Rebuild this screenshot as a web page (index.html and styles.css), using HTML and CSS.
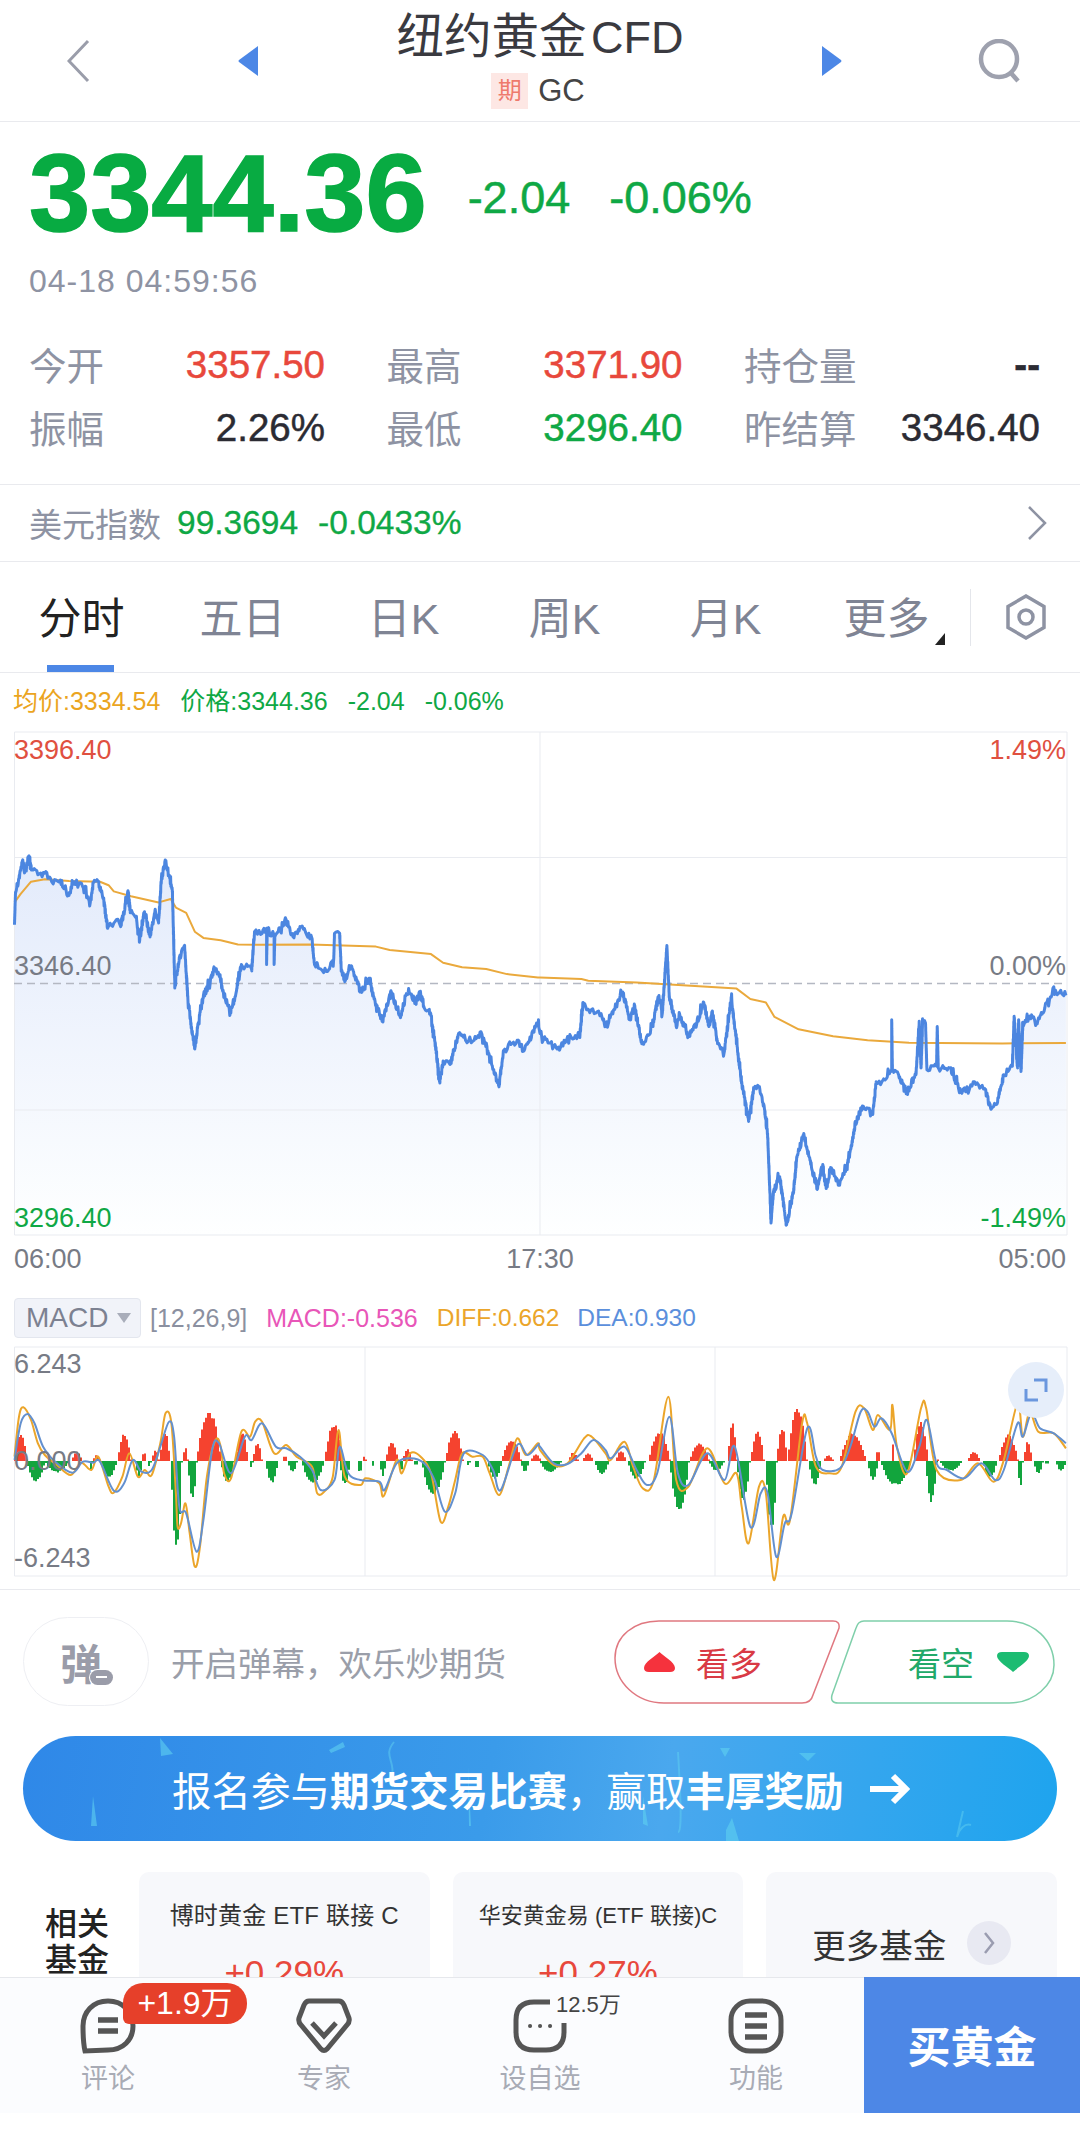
FILE: index.html
```html
<!DOCTYPE html>
<html lang="zh-CN">
<head>
<meta charset="utf-8">
<title>纽约黄金 CFD</title>
<link rel="stylesheet" href="styles.css">
</head>
<body>
<div class="page">
  <header class="nav">
    <svg class="nav-back" viewBox="0 0 23 44"><path d="M21 2 2 22l19 20"/></svg>
    <svg class="nav-tri" viewBox="0 0 20 30"><path d="M20 0 1 14q-1 1 0 2l19 14z"/></svg>
    <div class="nav-title">
      <div class="nav-name"><span class="nav-cn">纽约黄金</span> <span class="nav-en">CFD</span></div>
      <div class="nav-sub"><span class="tag">期</span><span class="code">GC</span></div>
    </div>
    <svg class="nav-tri nav-next" viewBox="0 0 20 30"><path d="M0 0 19 14q1 1 0 2L0 30z"/></svg>
    <svg class="nav-search" viewBox="0 0 43 44"><circle cx="21" cy="20" r="18"/><path d="m32 33 8 9"/></svg>
  </header>

  <section class="quote">
    <div class="price-row">
      <span class="price">3344.36</span>
      <span class="change">-2.04</span>
      <span class="change">-0.06%</span>
    </div>
    <div class="time">04-18 04:59:56</div>
    <div class="stats">
      <div class="stat"><span class="stat-k">今开</span><span class="stat-v up">3357.50</span></div>
      <div class="stat"><span class="stat-k">最高</span><span class="stat-v up">3371.90</span></div>
      <div class="stat"><span class="stat-k">持仓量</span><span class="stat-v strong">--</span></div>
      <div class="stat"><span class="stat-k">振幅</span><span class="stat-v">2.26%</span></div>
      <div class="stat"><span class="stat-k">最低</span><span class="stat-v down">3296.40</span></div>
      <div class="stat"><span class="stat-k">昨结算</span><span class="stat-v">3346.40</span></div>
    </div>
  </section>

  <section class="index-row">
    <span class="index-name">美元指数</span>
    <span class="index-val">99.3694</span>
    <span class="index-val index-pct">-0.0433%</span>
    <svg class="index-arrow" viewBox="0 0 20 34"><path d="m2 1 16 16L2 33"/></svg>
  </section>

  <nav class="tabs">
    <div class="tab active">分时</div>
    <div class="tab">五日</div>
    <div class="tab">日K</div>
    <div class="tab">周K</div>
    <div class="tab">月K</div>
    <div class="tab">更多<svg class="tab-more" viewBox="0 0 10 12"><path d="M10 0v12H0z"/></svg></div>
    <div class="tab-sep"></div>
    <svg class="tab-set" viewBox="0 0 42 46"><path d="M21 2 39 12.500V33.500L21 44 3 33.500V12.500z"/><circle cx="21" cy="23" r="7"/></svg>
  </nav>

  <div class="legend">
    <span class="avg">均价:3334.54</span>
    <span class="down">价格:3344.36</span>
    <span class="down">-2.04</span>
    <span class="down">-0.06%</span>
  </div>

  <section class="chart">
    <svg class="chart-svg" viewBox="0 0 1080 550">
      <defs>
        <linearGradient id="areaFill" gradientUnits="userSpaceOnUse" x1="0" y1="120" x2="0" y2="505">
          <stop offset="0" stop-color="#e2eafb"/>
          <stop offset="1" stop-color="#feffff"/>
        </linearGradient>
      </defs>
      <path id="area" fill="url(#areaFill)"/>
      <path class="grid-line" d="M14.500 2H1067V505H14.500zM14 127.500H1067M14 380H1067M540 2V505"/>
      <path class="dash-line" d="M14 253.500H1067"/>
      <path id="avgLine" class="line-avg"/>
      <path id="priceLine" class="line-price"/>
    </svg>
    <span class="lab lab-l up lab-top">3396.40</span>
    <span class="lab lab-r up lab-top">1.49%</span>
    <span class="lab lab-l lab-mid">3346.40</span>
    <span class="lab lab-r lab-mid">0.00%</span>
    <span class="lab lab-l down lab-bot">3296.40</span>
    <span class="lab lab-r down lab-bot">-1.49%</span>
    <div class="axis">
      <span>06:00</span><span>17:30</span><span>05:00</span>
    </div>
  </section>

  <section class="macd">
    <svg class="macd-svg" viewBox="0 0 1080 309">
      <path class="grid-line" d="M14.500 67H1067V296H14.500zM365 67V296M715 67V296"/>
      <path id="barsUp" fill="#f5432f"/>
      <path id="barsDown" fill="#12a53d"/>
      <path id="diffLine" class="line-diff"/>
      <path id="deaLine" class="line-dea"/>
    </svg>
    <div class="macd-head">
      <div class="macd-btn">MACD<i class="macd-caret"></i></div>
      <span class="macd-params">[12,26,9]</span>
      <span class="macd-m">MACD:-0.536</span>
      <span class="macd-d">DIFF:0.662</span>
      <span class="macd-e">DEA:0.930</span>
    </div>
    <span class="mlab mlab-top">6.243</span>
    <span class="mlab mlab-mid">0.000</span>
    <span class="mlab mlab-bot">-6.243</span>
    <div class="expand">
      <svg viewBox="0 0 24 24"><path d="M10 2h12v12M2 11v11h12"/></svg>
    </div>
  </section>

  <section class="danmu">
    <div class="danmu-pill"><span class="danmu-glyph">弹</span><i class="danmu-off"></i></div>
    <span class="danmu-text">开启弹幕&#xFF0C;欢乐炒期货</span>
    <div class="vote">
      <svg class="vote-shape" viewBox="0 0 441 84">
        <path class="vote-red" d="M45 1H219Q226 1 225 8L199 75Q197 83 188 83H50C22 83 1 62 1 38C1 16 20 1 45 1Z"/>
        <path class="vote-green" d="M250 1H393C420 1 440 20 440 45C440 65 420 83 395 83H224Q216 83 218 75L242 8Q244 1 250 1Z"/>
      </svg>
      <div class="vote-up">
        <svg viewBox="0 0 31 20"><path d="M15.500 0C19 4 31 10 31 16q0 4-5 4H5q-5 0-5-4C0 10 12 4 15.500 0z"/></svg>
        <span>看多</span>
      </div>
      <div class="vote-down">
        <span>看空</span>
        <svg viewBox="0 0 32 20"><path d="M16 20C12 16 0 9 0 4q0-4 5-4h22q5 0 5 4c0 5-12 12-16 16z"/></svg>
      </div>
    </div>
  </section>

  <section class="banner">
    <svg class="banner-bits" viewBox="0 0 1034 105">
      <path class="bit" d="M137 2 150 18 138 20zM306 14l14-8 2 5-14 6zM697 12h10l-5 9zM776 17h17l-8 8zM703 94l6-12 7 23h-13zM70 60l4 30h-6zM620 60l5 30-5-2zM445 30l3 60h-2z"/>
      <path class="curve" d="M371 6c-8 10-4 14-2 24s-2 14 2 20M655 16c3 50 4 80 0 80M940 75l-6 26c2-8 8-14 14-12"/>
    </svg>
    <span class="banner-text">报名参与<b>期货交易比赛</b>&#xFF0C;赢取<b>丰厚奖励</b></span>
    <svg class="banner-arrow" viewBox="0 0 42 32"><path d="M2 16h36M25 3l13 13-13 13"/></svg>
  </section>

  <section class="funds">
    <div class="funds-label">相关<br>基金</div>
    <div class="card">
      <div class="card-title">博时黄金 ETF 联接 C</div>
      <div class="card-val">+0.29%</div>
    </div>
    <div class="card">
      <div class="card-title card-title-sm">华安黄金易 (ETF 联接)C</div>
      <div class="card-val">+0.27%</div>
    </div>
    <div class="card card-more">
      <span>更多基金</span>
      <i class="more-dot"><svg viewBox="0 0 12 24"><path d="m2 2 8 10-8 10"/></svg></i>
    </div>
  </section>

  <footer class="bar">
    <div class="bar-item">
      <svg class="bar-icon" viewBox="0 0 56 56"><path d="M28 3C13 3 3 14 3 28c0 9 0 16 2 25l23-1c15 0 25-10 25-24S43 3 28 3z"/><path class="fill-bars" d="M18 22h20M18 33h20"/></svg>
      <span>评论</span>
      <em class="badge">+1.9万</em>
    </div>
    <div class="bar-item">
      <svg class="bar-icon" viewBox="0 0 56 56"><path d="M13 3h30q3 0 5 4l5 13q1 4-2 7L31 51q-3 3-6 0L5 27q-3-3-2-7L8 7q2-4 5-4z"/><path d="m16 25 12 13 12-13"/></svg>
      <span>专家</span>
    </div>
    <div class="bar-item">
      <svg class="bar-icon" viewBox="0 0 56 56"><path d="M38 4H22C10 4 4 10 4 22v12c0 12 6 18 18 18h12c12 0 18-6 18-18V25"/><path class="dots" d="M18 28h.1M28 28h.1M38 28h.1"/></svg>
      <span>设自选</span>
      <em class="count">12.5万</em>
    </div>
    <div class="bar-item">
      <svg class="bar-icon" viewBox="0 0 56 56"><rect x="3" y="3" width="50" height="50" rx="19"/><path class="fill-bars" d="M17 17h22M17 28h22M17 39h22"/></svg>
      <span>功能</span>
    </div>
    <div class="buy">买黄金</div>
  </footer>
</div>
<script src="chart.js"></script>
</body>
</html>
```
FILE: styles.css
```css
* { box-sizing: border-box; }
html, body { margin: 0; padding: 0; background: #fff; }
body { font-family: "Liberation Sans", "Noto Sans CJK SC", sans-serif; color: #2b2b33; }
.page { position: relative; width: 1080px; height: 2141px; overflow: hidden; background: #fff; }
.up { color: #e8483c; }
.down { color: #0fa845; }

.nav { display: flex; align-items: center; height: 122px; padding: 0 59px 0 67px; border-bottom: 1px solid #e9eaee; }
.nav-back { width: 23px; height: 44px; margin-right: 148px; fill: none; stroke: #9a9daa; stroke-width: 3; }
.nav-tri { width: 20px; height: 30px; fill: #4c87e6; }
.nav-search { width: 43px; height: 44px; margin-left: 136px; fill: none; stroke: #9ea1ae; stroke-width: 4.500; }
.nav-title { flex: 1; align-self: flex-start; padding-top: 11px; text-align: center; }
.nav-name { height: 52px; line-height: 52px; color: #3a3a40; white-space: nowrap; }
.nav-cn { font-size: 47.500px; }
.nav-en { font-size: 45px; }
.nav-sub { display: flex; justify-content: center; align-items: center; height: 36px; margin-top: 10px; padding-right: 4px; }
.tag { width: 37px; height: 36px; line-height: 36px; font-size: 24px; text-align: center; color: #ee7a6c; background: #fde7e4; }
.code { margin-left: 10px; font-size: 31px; color: #444; }

.quote { height: 363px; padding-top: 16px; border-bottom: 1px solid #e9eaee; }
.price-row { display: flex; align-items: center; height: 110px; padding-left: 29px; color: #0fa845; }
.price { margin-right: 41px; font-size: 110px; line-height: 110px; font-weight: 700; color: #08ab42; -webkit-text-stroke: 1.500px #08ab42; }
.change { margin: 10px 39px 0 0; font-size: 45px; -webkit-text-stroke: .5px #0fa845; }
.time { height: 40px; margin-top: 13px; padding-left: 29px; font-size: 32px; line-height: 40px; letter-spacing: 1px; color: #8e93a3; }
.stats { display: grid; grid-template-columns: repeat(3, 296px); grid-auto-rows: 63px; column-gap: 61.500px; margin-top: 32px; padding-left: 29px; }
.stat { display: flex; justify-content: space-between; align-items: center; }
.stat-k { margin-top: -3px; font-size: 37.500px; color: #8e93a3; }
.stat-v { font-size: 38.500px; -webkit-text-stroke: .5px currentColor; }
.stat-v.strong { font-weight: 700; }

.index-row { display: flex; align-items: center; height: 77px; padding: 0 33px 0 29px; border-bottom: 1px solid #e9eaee; }
.index-name { font-size: 33px; color: #8e93a3; }
.index-val { margin-left: 16px; font-size: 33.500px; color: #0fa845; -webkit-text-stroke: .3px #0fa845; }
.index-pct { margin-left: 20px; }
.index-arrow { width: 20px; height: 34px; margin-left: auto; fill: none; stroke: #8e93a3; stroke-width: 2.500; }

.tabs { display: flex; align-items: center; height: 111px; padding-left: 1px; border-bottom: 1px solid #e9eaee; }
.tab { position: relative; width: 161px; height: 110px; line-height: 114px; font-size: 43px; text-align: center; color: #7f8494; }
.tab.active { color: #222; }
.tab.active::after { content: ""; position: absolute; left: 46px; bottom: 0; width: 67px; height: 7px; background: #4c87e6; }
.tab-more { position: absolute; left: 129px; top: 71px; width: 10px; height: 12px; fill: #222; }
.tab-sep { width: 1px; height: 57px; margin-left: 3px; background: #e4e6eb; }
.tab-set { width: 42px; height: 46px; margin-left: 34px; fill: none; stroke: #8e93a3; stroke-width: 3.500; }

.legend { display: flex; align-items: baseline; gap: 20px; height: 57px; padding: 14px 0 0 13px; font-size: 25px; line-height: 28px; }
.legend span { display: block; height: 28px; }
.avg { color: #eba51f; }

.chart { position: relative; height: 550px; }
.chart-svg, .macd-svg { position: absolute; left: 0; top: 0; width: 1080px; }
.chart-svg { height: 550px; }
.grid-line { fill: none; stroke: #e9ebf0; stroke-width: 1; }
.dash-line { fill: none; stroke: #b4b8c2; stroke-width: 1.500; stroke-dasharray: 8 5; }
.line-avg { fill: none; stroke: #eaa93c; stroke-width: 2; stroke-linejoin: round; }
.line-price { fill: none; stroke: #4c86e0; stroke-width: 3; stroke-linejoin: round; }
.lab { position: absolute; height: 32px; line-height: 32px; font-size: 27px; color: #777b85; }
.lab.up { color: #e0503f; }
.lab.down { color: #0fa845; }
.lab-l { left: 14px; }
.lab-r { right: 14px; }
.lab-top { top: 4px; }
.lab-mid { top: 220px; }
.lab-bot { top: 472px; }
.axis { position: absolute; left: 14px; right: 14px; top: 513px; display: flex; justify-content: space-between; font-size: 27px; line-height: 32px; color: #777b85; }

.macd { position: relative; height: 310px; padding-top: 18px; border-bottom: 1px solid #e9eaee; }
.macd-svg { height: 309px; }
.macd-head { position: relative; display: flex; align-items: center; height: 40px; margin-left: 14px; font-size: 25px; white-space: nowrap; }
.macd-btn { display: flex; align-items: center; width: 127px; height: 40px; padding-left: 11px; font-size: 28px; color: #7c8191; background: #f1f3f9; border: 1px solid #e3e6ee; border-radius: 4px; }
.macd-caret { width: 0; height: 0; margin-left: 9px; border-left: 7px solid transparent; border-right: 7px solid transparent; border-top: 10px solid #a9adba; }
.macd-params { margin-left: 9px; color: #8b90a0; }
.macd-m { margin-left: 19px; color: #e856b8; }
.macd-d { margin-left: 19px; font-size: 24.500px; color: #eba52a; }
.macd-e { margin-left: 18px; font-size: 24.500px; color: #5b8fdc; }
.line-diff { fill: none; stroke: #eba52a; stroke-width: 2; stroke-linejoin: round; }
.line-dea { fill: none; stroke: #6390cf; stroke-width: 2; stroke-linejoin: round; }
.mlab { position: absolute; left: 14px; font-size: 27px; line-height: 32px; color: #777b85; }
.mlab-top { top: 68px; }
.mlab-mid { top: 165px; }
.mlab-bot { top: 262px; }
.expand { position: absolute; left: 1008px; top: 82px; display: flex; align-items: center; justify-content: center; width: 56px; height: 56px; border-radius: 50%; background: #e6eefa; }
.expand svg { width: 24px; height: 24px; fill: none; stroke: #6b97de; stroke-width: 3; }

.danmu { display: flex; align-items: center; height: 146px; padding: 27px 25px 30px 23px; }
.danmu-pill { position: relative; display: flex; align-items: center; justify-content: center; width: 126px; height: 89px; border: 1px solid #eeeff3; border-radius: 45px; }
.danmu-glyph { margin-right: 10px; font-size: 42px; font-weight: 700; color: #9a9ca9; }
.danmu-off { position: absolute; left: 66px; top: 52px; width: 23px; height: 15px; border-radius: 8px; background: #9a9ca9; box-shadow: 0 0 0 1px #fff; }
.danmu-off::after { content: ""; position: absolute; left: 6px; top: 6px; width: 11px; height: 2px; background: #fff; }
.danmu-text { margin-left: 22px; font-size: 33.500px; color: #9a9ea9; white-space: nowrap; }
.vote { position: relative; display: flex; align-items: center; width: 441px; height: 84px; margin-left: auto; }
.vote-shape { position: absolute; left: 0; top: 0; width: 441px; height: 84px; }
.vote-red { fill: none; stroke: #e07880; stroke-width: 1.500; }
.vote-green { fill: none; stroke: #7fcfaa; stroke-width: 1.500; }
.vote-up, .vote-down { position: relative; display: flex; align-items: center; font-size: 33px; }
.vote-up { width: 226px; padding-left: 30px; gap: 21px; color: #d93a45; }
.vote-up svg { width: 31px; height: 20px; fill: #f5323d; }
.vote-down { margin-left: 68px; gap: 23px; color: #22a96a; }
.vote-down svg { width: 32px; height: 20px; fill: #1cbc72; }

.banner { position: relative; display: flex; align-items: center; width: 1034px; height: 105px; margin-left: 23px; padding-left: 149px; border-radius: 53px; overflow: hidden; color: #fff; background: linear-gradient(100deg, #2f88e8 0%, #3a9bea 45%, #4aa8ee 62%, #1ea4ee 100%); }
.banner-bits { position: absolute; left: 0; top: 0; width: 1034px; height: 105px; }
.bit { fill: #5fd0f0; opacity: .6; }
.curve { fill: none; stroke: #5fd0f0; stroke-width: 2; opacity: .5; }
.banner-text { position: relative; font-size: 39.500px; white-space: nowrap; }
.banner-text b { font-weight: 700; }
.banner-arrow { position: relative; width: 42px; height: 32px; margin-left: 24px; fill: none; stroke: #fff; stroke-width: 6; }

.funds { display: flex; gap: 23px; padding: 31px 23px 0 45px; }
.funds-label { width: 71px; margin-top: 34px; font-size: 32px; line-height: 36px; font-weight: 500; color: #222; }
.card { width: 291px; height: 142px; padding-top: 30px; text-align: center; background: #f7f8fb; border-radius: 10px; }
.card-title { height: 28px; font-size: 24px; line-height: 28px; letter-spacing: .2px; color: #333; white-space: nowrap; }
.card-title-sm { font-size: 22px; letter-spacing: 0; }
.card-val { margin-top: 23px; font-size: 35px; line-height: 40px; color: #e8483c; }
.card-more { display: flex; align-items: center; justify-content: center; gap: 21px; padding-top: 0; font-size: 33.500px; color: #333; }
.more-dot { display: flex; align-items: center; justify-content: center; width: 44px; height: 44px; border-radius: 50%; background: #e8e9f2; }
.more-dot svg { width: 12px; height: 24px; fill: none; stroke: #9a9cb0; stroke-width: 2.500; }

.bar { position: absolute; left: 0; right: 0; bottom: 28px; display: flex; height: 136px; background: #fbfcfe; border-top: 1px solid #e6e8ec; }
.bar-item { position: relative; display: flex; flex-direction: column; align-items: center; width: 216px; padding-top: 20px; font-size: 27px; line-height: 32px; color: #a8abb5; }
.bar-icon { width: 56px; height: 56px; margin-bottom: 9px; fill: none; stroke: #555; stroke-width: 5; }
.fill-bars { stroke-width: 5.500; }
.dots { stroke-width: 4; stroke-linecap: round; }
.badge { position: absolute; left: 123px; top: 5px; width: 124px; height: 41px; line-height: 41px; font-size: 32px; font-style: normal; text-align: center; color: #fff; background: #e6402a; border-radius: 20px 20px 20px 6px; }
.count { position: absolute; left: 122px; top: 14px; font-size: 22px; line-height: 26px; font-style: normal; color: #444; background: #fbfcfe; padding-left: 2px; }
.buy { flex: 1; margin-top: -1px; line-height: 143px; text-align: center; font-size: 43px; font-weight: 700; color: #fff; background: #4d87e6; }
```
FILE: chart.js
```js
// Intraday series, sampled as [x, y] waypoints. Left half x = v/2.9, right half x = 540 + v/2.9.
var priceA = [42,565,45,470,55,430,65,380,72,410,84,365,92,405,110,420,130,415,150,440,175,435,200,480,215,440,240,455,262,500,270,445,285,440,300,490,312,575,330,560,350,570,372,470,378,530,395,545,405,610,418,530,435,600,450,520,460,560,468,430,480,380,492,430,500,470,507,745,520,660,535,625,545,780,555,860,565,925,575,850,590,770,605,740,622,690,635,710,650,770,668,820,685,760,700,680,730,695,738,585,760,590,773,575,773,680,775,590,795,595,795,680,797,600,830,550,850,600,870,570,905,605,912,680,950,700,968,660,970,590,985,590,990,700,1000,730,1020,685,1045,760,1070,720,1085,780,1108,845,1135,760,1160,830,1185,750,1205,790,1218,760,1230,805,1245,810,1260,890,1275,1020,1285,960,1305,970,1330,880,1350,900,1375,900,1395,875,1415,930,1447,1035,1460,930,1500,900,1520,930,1560,850];
var priceB = [0,880,50,925,90,890,115,890,125,790,140,810,170,815,190,860,215,810,240,760,260,840,275,800,295,910,320,880,345,770,355,820,368,625,375,770,395,860,405,825,430,890,455,850,475,790,490,860,500,815,515,910,535,930,555,775,575,950,585,1020,605,1135,620,1040,635,1035,650,1090,660,1170,670,1430,677,1340,695,1295,715,1435,735,1340,745,1240,765,1170,785,1260,805,1330,820,1260,830,1330,845,1270,865,1320,890,1270,915,1140,935,1090,965,1115,975,1020,1005,1010,1020,985,1020,840,1022,985,1040,1000,1062,1055,1090,1000,1100,850,1105,980,1110,840,1118,850,1122,985,1150,975,1152,860,1155,980,1190,980,1220,1050,1260,1020,1290,1040,1308,1100,1325,1085,1345,1000,1370,975,1375,830,1385,980,1388,840,1395,990,1400,860,1420,830,1440,850,1470,790,1495,755,1510,755,1525,770];
var avgA = [42,500,60,475,90,440,130,433,200,438,290,440,315,450,330,468,380,482,460,500,495,490,510,515,540,530,565,585,590,603,640,610,690,622,750,623,900,622,1090,628,1130,638,1250,650,1285,675,1340,688,1410,693,1470,708,1560,718];
var avgB = [0,718,120,722,140,727,280,732,570,750,610,780,655,790,680,832,750,868,850,888,950,900,1070,907,1340,909,1525,908];
var diffA = [42,530,55,410,68,382,90,420,110,490,130,525,165,555,205,585,235,548,265,570,285,530,315,620,330,638,355,590,375,520,400,590,420,570,440,585,465,490,480,400,497,430,510,640,515,740,525,730,538,670,550,760,565,860,580,800,600,590,625,480,640,500,650,580,670,595,700,455,725,470,740,425,760,425,795,520,830,495,860,530,905,560,920,640,945,630,965,590,982,450,1000,590,1045,615,1060,595,1100,610,1113,648,1150,540,1165,580,1190,520,1220,530,1250,580,1278,725,1300,680,1320,600,1340,520,1370,530,1400,530,1420,580,1448,645,1475,560,1500,475,1525,525,1560,490];
var diffB = [0,510,40,555,80,550,128,475,150,470,190,520,205,540,245,485,270,560,298,625,330,600,372,350,395,600,430,620,485,505,535,610,570,580,585,680,605,790,635,620,655,640,678,900,705,710,725,720,760,430,775,430,800,560,840,580,875,560,915,395,940,385,965,450,980,405,1015,450,1022,375,1035,500,1065,580,1105,385,1120,385,1150,570,1220,600,1270,550,1315,605,1345,540,1385,370,1400,470,1420,395,1445,455,1490,460,1525,505];
var deaA = [42,540,60,430,80,402,100,430,125,500,160,545,210,578,240,545,270,548,290,545,330,632,360,610,385,540,410,575,440,570,465,500,490,425,505,470,520,680,540,700,570,815,590,720,615,510,635,490,670,580,710,470,730,480,760,430,800,500,830,505,870,530,905,570,930,630,970,600,985,500,1010,580,1045,600,1100,605,1115,630,1150,550,1190,535,1230,550,1260,600,1290,695,1320,640,1345,520,1400,525,1430,570,1452,630,1500,495,1530,525,1560,495];
var deaB = [0,500,40,550,80,552,120,520,155,480,190,510,205,535,245,500,280,570,310,615,340,580,375,410,400,580,430,615,485,520,535,600,565,500,610,740,640,640,660,640,685,830,710,730,730,700,775,445,800,530,820,570,870,565,900,500,930,395,950,395,970,440,990,415,1020,460,1065,575,1100,500,1122,420,1150,550,1180,570,1230,595,1280,550,1320,600,1345,570,1385,430,1400,470,1425,400,1450,445,1490,460,1525,490];
// Histogram humps as [from, to, height].
var upA = [[42,78,85],[210,238,28],[270,290,18],[343,380,85],[412,422,30],[442,460,35],[465,492,90],[530,545,45],[572,640,155],[685,720,90],[735,760,55],[820,832,18],[942,995,115],[1052,1062,15],[1118,1155,58],[1170,1195,38],[1292,1342,95],[1455,1510,65],[1540,1568,20]];
var downA = [[78,130,62],[130,200,35],[262,270,30],[292,338,50],[395,412,50],[428,438,18],[495,528,265],[545,570,115],[640,680,65],[725,735,22],[770,805,68],[835,860,35],[875,940,70],[985,1015,75],[1038,1050,40],[1078,1085,15],[1102,1118,45],[1158,1170,35],[1200,1212,15],[1225,1290,105],[1355,1362,15],[1378,1388,25],[1415,1455,55],[1510,1535,32]];
var upB = [[85,110,28],[125,155,25],[220,250,30],[315,378,90],[435,490,55],[545,570,115],[612,650,90],[688,715,105],[718,775,160],[825,850,18],[870,945,85],[975,985,35],[1020,1028,50],[1085,1125,120],[1150,1155,40],[1240,1275,28],[1330,1385,80],[1405,1428,60]];
var downB = [[0,60,35],[160,200,40],[255,305,55],[378,432,150],[490,535,30],[570,610,120],[655,688,210],[780,815,75],[950,980,60],[990,1075,75],[1120,1150,125],[1160,1225,30],[1285,1325,50],[1385,1402,80],[1432,1460,40],[1465,1475,10],[1495,1525,30]];

var seed = 4711;
function rnd() {
  seed = (seed * 16807) % 2147483647;
  return seed / 2147483647;
}
function toPoints(a, b, yScale) {
  var out = [], i;
  for (i = 0; i < a.length; i += 2) out.push([a[i] / 2.9, a[i + 1] / yScale]);
  for (i = 0; i < b.length; i += 2) out.push([540 + b[i] / 2.9, b[i + 1] / yScale]);
  return out;
}
function jagged(pts) {
  var out = [pts[0]];
  for (var i = 1; i < pts.length; i++) {
    var p = pts[i - 1], q = pts[i];
    var len = Math.hypot(q[0] - p[0], q[1] - p[1]);
    var n = Math.max(1, Math.round(len / 1.5));
    var spike = Math.abs(q[0] - p[0]) < 1.5;
    for (var k = 1; k <= n; k++) {
      var t = k / n;
      var x = p[0] + (q[0] - p[0]) * t;
      var y = p[1] + (q[1] - p[1]) * t;
      if (k < n && !spike) {
        var r = rnd();
        y += (rnd() - 0.5) * (r > 0.88 ? 15 : 7);
      }
      out.push([x, y]);
    }
  }
  return out;
}
function polyline(pts) {
  return pts.map(function (p, i) {
    return (i ? "L" : "M") + p[0].toFixed(1) + " " + p[1].toFixed(1);
  }).join("");
}
function smooth(pts) {
  var d = "M" + pts[0][0].toFixed(1) + " " + pts[0][1].toFixed(1);
  for (var i = 0; i < pts.length - 1; i++) {
    var p0 = pts[i - 1] || pts[i], p1 = pts[i], p2 = pts[i + 1], p3 = pts[i + 2] || p2;
    d += "C" + (p1[0] + (p2[0] - p0[0]) / 6).toFixed(1) + " " + (p1[1] + (p2[1] - p0[1]) / 6).toFixed(1) +
      " " + (p2[0] - (p3[0] - p1[0]) / 6).toFixed(1) + " " + (p2[1] - (p3[1] - p1[1]) / 6).toFixed(1) +
      " " + p2[0].toFixed(1) + " " + p2[1].toFixed(1);
  }
  return d;
}
function bars(list, offset, dir) {
  var zero = 181, d = "";
  list.forEach(function (b) {
    var x0 = Math.round(offset + b[0] / 2.9), x1 = Math.round(offset + b[1] / 2.9);
    for (var x = x0; x < Math.max(x1, x0 + 1); x += 2) {
      var t = (x + 1 - x0) / Math.max(x1 - x0, 1);
      var h = (b[2] / 3) * Math.pow(Math.sin(Math.PI * Math.min(t, 1)), 0.8) * (0.88 + 0.12 * rnd());
      h = Math.max(h, 1.5);
      d += "M" + x + " " + zero + "V" + (zero - dir * h).toFixed(1) + "H" + (x + 2) + "V" + zero + "Z";
    }
  });
  return d;
}
function set(id, d) { document.getElementById(id).setAttribute("d", d); }

var price = jagged(toPoints(priceA, priceB, 2.9));
var line = polyline(price);
set("priceLine", line);
set("area", line + "L" + price[price.length - 1][0].toFixed(1) + " 505L14.500 505Z");
set("avgLine", polyline(toPoints(avgA, avgB, 2.9)));
set("barsUp", bars(upA, 0, 1) + bars(upB, 540, 1));
set("barsDown", bars(downA, 0, -1) + bars(downB, 540, -1));
set("diffLine", smooth(toPoints(diffA, diffB, 3)));
set("deaLine", smooth(toPoints(deaA, deaB, 3)));
```
